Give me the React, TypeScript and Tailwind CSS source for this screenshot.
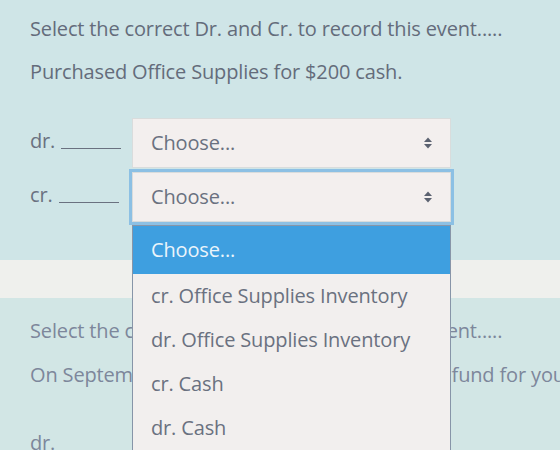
const OPTIONS = [
  'cr. Office Supplies Inventory',
  'dr. Office Supplies Inventory',
  'cr. Cash',
  'dr. Cash',
];

function SelectArrows() {
  return (
    <svg width="10" height="14" viewBox="0 0 10 14" className="shrink-0">
      <path d="M1 6 L5 1.5 L9 6 Z" fill="#5b6270" />
      <path d="M1 8 L5 12.5 L9 8 Z" fill="#5b6270" />
    </svg>
  );
}

function SelectBox({ focused }: { focused?: boolean }) {
  return (
    <div
      className={`flex h-[50px] w-[319px] items-center justify-between border border-[#d9dcdc] bg-[#f3efee] pl-[18px] pr-[17px] ${
        focused ? 'outline-[3px] outline-solid outline-[#8cc0e4]' : ''
      }`}
    >
      <span className="text-[20px] tracking-[-0.15px] text-[#6a7180]">Choose...</span>
      <SelectArrows />
    </div>
  );
}

function EntryRow({ label, focused }: { label: string; focused?: boolean }) {
  return (
    <div className="flex items-center">
      <div className="flex w-[102px] items-center">
        <span className="-mt-[4px] text-[20px] leading-none text-[#6a7180]">{label}</span>
        <span className="ml-[6px] mt-[10px] h-px w-[60px] bg-[#6a7180]" />
      </div>
      <SelectBox focused={focused} />
    </div>
  );
}

export default function App() {
  return (
    <div
      className="relative h-[450px] w-[560px] overflow-hidden bg-[#eeeeeb] tracking-[-0.15px]"
      style={{ fontFamily: '"Open Sans", "Noto Sans", sans-serif' }}
    >
      {/* Question 1 */}
      <section className="h-[260px] bg-[#cfe5e7] px-[30px] pt-[16px]">
        <p className="text-[20px] leading-[26px] text-[#646c7b]">
          Select the correct Dr. and Cr. to record this event.....
        </p>
        <p className="mt-[17px] text-[20px] leading-[26px] text-[#646c7b]">
          Purchased Office Supplies for $200 cash.
        </p>
        <div className="mt-[33px] flex flex-col gap-[4px]">
          <EntryRow label="dr." />
          <EntryRow label="cr." focused />
        </div>
      </section>

      {/* separator band */}
      <div className="h-[38px] bg-[#eff0ed]" />

      {/* Question 2 */}
      <section className="h-[200px] bg-[#d2e6e5] px-[30px] pt-[20px]">
        <p className="whitespace-nowrap text-[20px] leading-[26px] text-[#7d879b]">
          Select the correct Dr. and Cr. to record this event.....
        </p>
        <p className="mt-[18px] whitespace-nowrap text-[20px] leading-[26px] text-[#7d879b]">
          On September 1st the company set up a cash fund for your office.
        </p>
        <p className="mt-[42px] text-[20px] leading-[26px] text-[#7d879b]">dr.</p>
      </section>

      {/* open dropdown list */}
      <ul className="absolute left-[132px] top-[225px] w-[319px] border border-[#8795a8] bg-[#f2efee] text-[20px] text-[#6a7180]">
        <li className="flex h-[48px] items-center bg-[#3e9fe0] pl-[18px] text-[#eaf4fb]">Choose...</li>
        {OPTIONS.map((o) => (
          <li key={o} className="flex h-[44px] items-center pl-[18px]">
            {o}
          </li>
        ))}
      </ul>
    </div>
  );
}
